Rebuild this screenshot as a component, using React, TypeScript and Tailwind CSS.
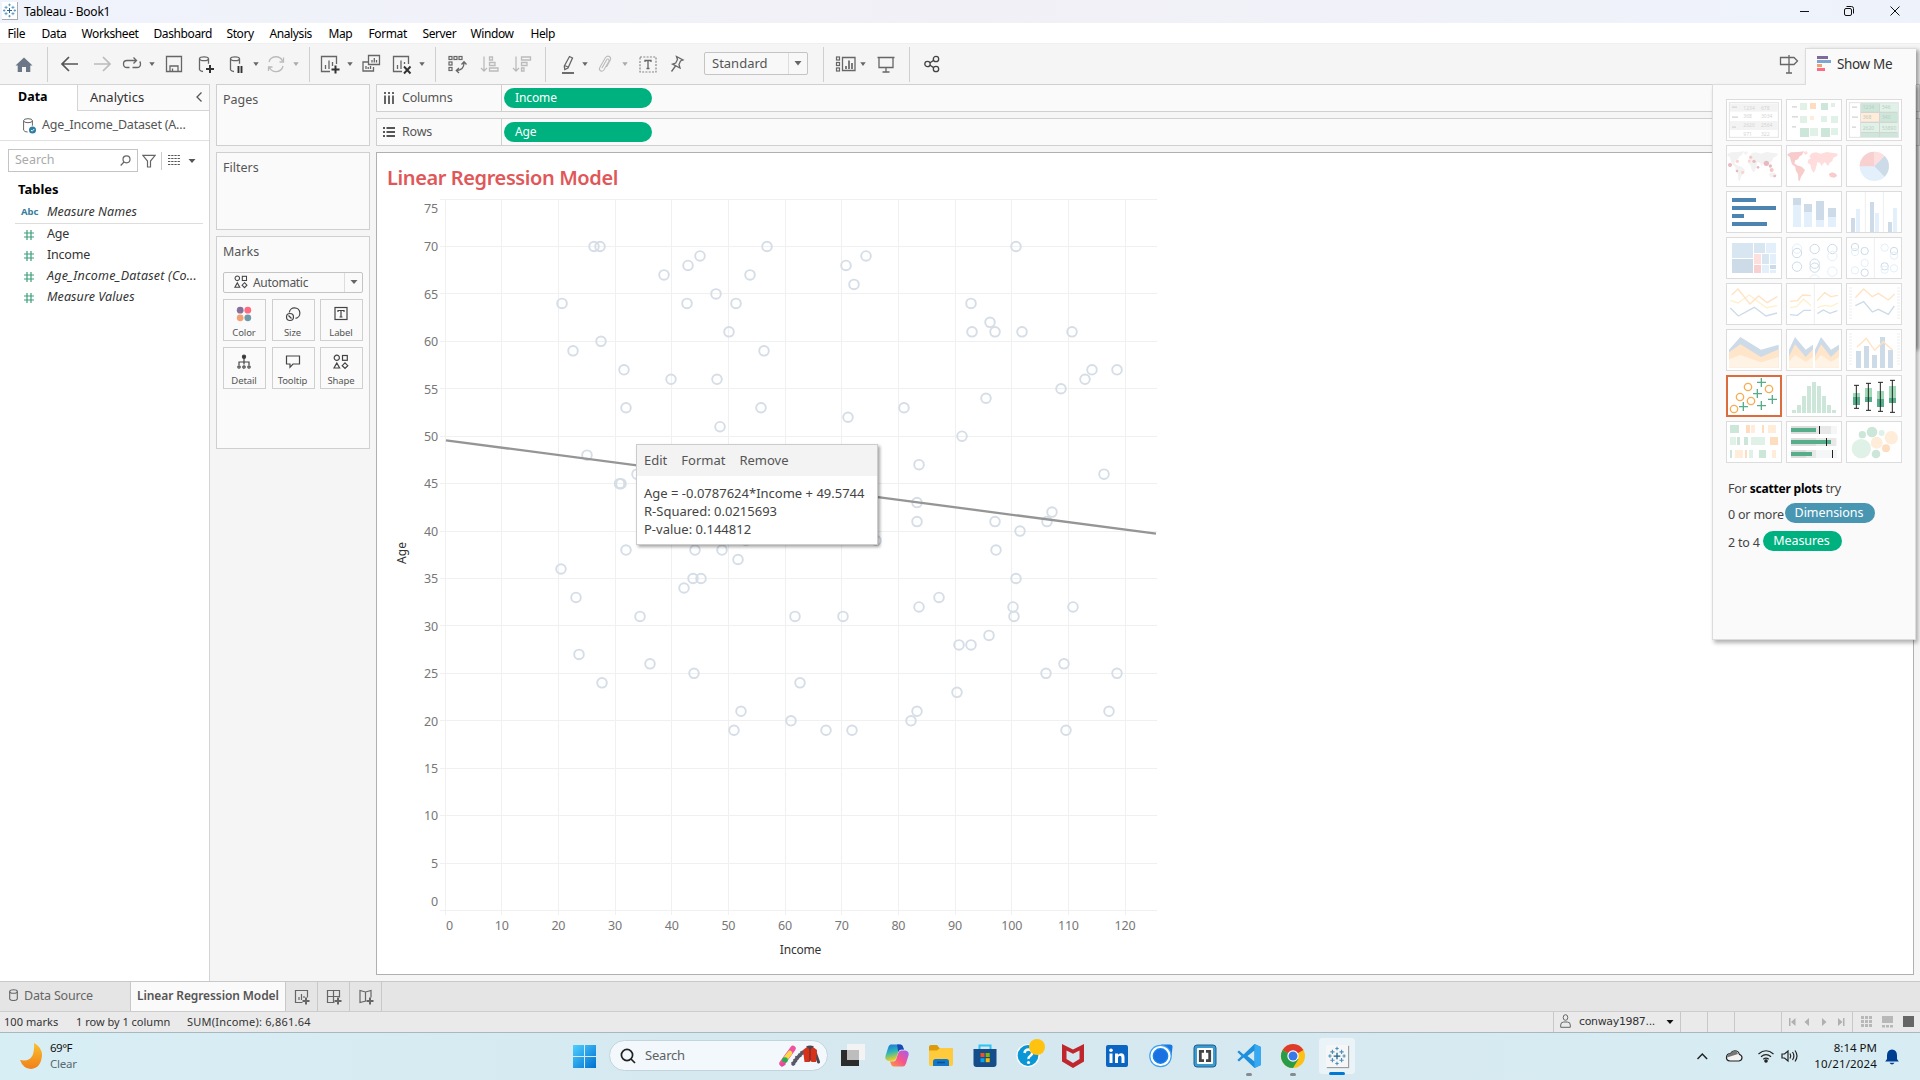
import React from "react";

type Kids = { children?: React.ReactNode };

const UI = "font-['Noto_Sans',sans-serif]";

function Ico({ m, c = "#666", children }: Kids & { m: string; c?: string }) {
  return (
    <svg className={`h-6 w-6 shrink-0 ${m}`} viewBox="0 0 24 24" fill="none" stroke={c} strokeWidth="1.3">
      {children}
    </svg>
  );
}

function Caret({ m, c = "#666" }: { m: string; c?: string }) {
  return (
    <svg className={`h-2 w-2 shrink-0 ${m}`} viewBox="0 0 8 8">
      <path d="M1.3 2.2h5.4L4 6z" fill={c} />
    </svg>
  );
}

function Sep({ m }: { m: string }) {
  return <div className={`h-[35px] w-px shrink-0 bg-[#cfcfcf] ${m}`} />;
}

const sq = (x: number, y: number, s = 3) => <rect key={`${x}-${y}`} x={x} y={y} width={s} height={s} />;

function TitleBar() {
  return (
    <div className="flex h-[23px] items-center bg-gradient-to-r from-[#eff3fb] via-[#f2f0f7] to-[#eef3fb] pl-[2px]">
      <div className="mt-[-2px] flex h-[18px] w-4 items-center justify-center border-r border-b border-[#aaa] bg-white">
        <TableauMark size={15} />
      </div>
      <span className="ml-[6px] w-[1772px] text-[12px] tracking-[-0.22px] text-black">Tableau - Book1</span>
      <svg className="mt-[-2px] h-5 w-[110px]" viewBox="0 0 110 20" fill="none" stroke="#111" strokeWidth="1">
        <path d="M4 10.500h9M94.500 5.500l9 9M103.500 5.500l-9 9" />
        <rect x="48.500" y="7.500" width="7" height="7" rx="1.500" />
        <path d="M50.500 5.500h5q2 0 2 2v5" />
      </svg>
    </div>
  );
}

function TableauMark({ size }: { size: number }) {
  return (
    <svg width={size} height={size} viewBox="0 0 24 24" stroke="#2f7ba7" strokeWidth="1.300" fill="none">
      <path d="M12 8v8M8 12h8" stroke="#1f5f86" strokeWidth="1.500" />
      <path d="M12 1v4M10 3h4M12 19v4M10 21h4M1.500 12h4M3.500 10v4M18.500 12h4M20.500 10v4M6.500 4.500v5M4 7h5M17.500 4.500v5M15 7h5M6.500 14.500v5M4 17h5M17.500 14.500v5M15 17h5" stroke="#4a8fbd" />
    </svg>
  );
}

function MenuBar() {
  return (
    <div className="flex h-5 items-center bg-white pt-[2px] pl-[7.500px] text-[12px] tracking-[-0.4px] text-black [&>span]:shrink-0">
      <span className="w-[34px]">File</span>
      <span className="w-[40px]">Data</span>
      <span className="w-[72px]">Worksheet</span>
      <span className="w-[73px]">Dashboard</span>
      <span className="w-[43px]">Story</span>
      <span className="w-[59px]">Analysis</span>
      <span className="w-[40px]">Map</span>
      <span className="w-[54px]">Format</span>
      <span className="w-[48px]">Server</span>
      <span className="w-[60px]">Window</span>
      <span>Help</span>
    </div>
  );
}

const Cyl = ({ x = 5 }: { x?: number }) => (
  <g transform={`translate(${x} 4.500)`}>
    <ellipse cx="5" cy="2.200" rx="4.500" ry="1.900" />
    <path d="M.5 2.200v11q1 1.800 3.500 1.800M9.500 2.200v5" />
  </g>
);

function Toolbar() {
  return (
    <div className="flex h-[41px] items-center border-t border-[#efefef] bg-[#f5f5f5]">
      <Ico m="ml-3" c="none">
        <path d="M12 5.500l8.500 8h-2.200v6.500h-4.300v-5h-4v5H5.700v-6.500H3.500z" fill="#6b7787" />
      </Ico>
      <Sep m="ml-[11px]" />
      <Ico m="ml-[10px]" c="#555"><path d="M20 12H4.500M11 5l-7 7 7 7" strokeWidth="1.700" /></Ico>
      <Ico m="ml-2" c="#bbb"><path d="M4 12h15.500M13 5l7 7-7 7" strokeWidth="1.700" /></Ico>
      <Ico m="ml-[6px]"><path d="M9.500 15.500H7q-3.500 0-3.500-3.500t3.500-3.500h9M12.500 15.500H17q3.500 0 3.500-3.500 0-1.500-.8-2.500M13.500 5.500l3 3-3 3" /></Ico>
      <Caret m="ml-1" />
      <Ico m="ml-[6px]"><path d="M4.500 4.500h15v15h-15zM8 19v-5h8v5M10.500 19v-2.500" /></Ico>
      <Ico m="ml-2"><Cyl x={5} /><path d="M16 13v8M12 17h8" stroke="#333" strokeWidth="2" /></Ico>
      <Ico m="ml-[6px]"><Cyl x={6} /><path d="M14.500 14v7M17.500 14v7" stroke="#333" strokeWidth="1.900" /></Ico>
      <Caret m="ml-1" />
      <Ico m="ml-1" c="#bbb"><path d="M5 10a7.200 7.200 0 0 1 13.500-1M19 14A7.200 7.200 0 0 1 5.500 15.500M19.500 5.500V10h-4M4.500 19v-4h4" /></Ico>
      <Caret m="ml-1" c="#aaa" />
      <Sep m="ml-[9px]" />
      <Ico m="ml-2"><path d="M12 19.500H3.500v-15h15V12M7.500 17v-4M11 17V8.500M14.500 14v-4" /><path d="M17.500 13.500v8M13.500 17.500h8" stroke="#333" strokeWidth="2" /></Ico>
      <Caret m="ml-1" />
      <Ico m="ml-[5px]"><path d="M9.500 3.500h11v9h-11zM13 10.500V8M15.300 10.500V6M17.500 10.500V8M9 10H4v9h10.500v-4M7 17v-3M9.200 17v-2M11.500 17v-3" /></Ico>
      <Ico m="ml-[7px]"><path d="M12 19.500H3.500v-15h15V12M7.500 17v-4M11 17V8.500M14.500 12v-2" /><path d="M14 14.500l6.500 7M20.500 14.500l-6.500 7" stroke="#333" strokeWidth="1.900" /></Ico>
      <Caret m="ml-1" />
      <Sep m="ml-[9px]" />
      <Ico m="ml-[9px]">
        <g strokeWidth="1.200">{[sq(4, 4.500), sq(9, 4.500), sq(14, 4.500), sq(4, 10), sq(4, 15.500)]}</g>
        <path d="M19 11q0 7-7.500 7.500M16.500 12.500L19 9.800l2.500 2.700M14 16l-2.700 2.500L14 21" />
      </Ico>
      <Ico m="ml-[9px]" c="#bbb"><path d="M6 4.500v14.500M3 16l3 3 3-3M11.500 5h3v3h-3zM11.500 10.500h5.500v3h-5.500zM11.500 16h8.500v3h-8.500z" /></Ico>
      <Ico m="ml-2" c="#bbb"><path d="M6 4.500v14.500M3 16l3 3 3-3M11.500 5h9v3h-9zM11.500 10.500h5.500v3h-5.500zM11.500 16h2.500v3h-2.500z" /></Ico>
      <Sep m="ml-[11px]" />
      <Ico m="ml-[10px]"><path d="M13.500 4.500l3 1.500-4.500 10-3.200 1.500-.5-3.500zM8.500 13.500l3.500 1.500" /><path d="M6 21h12" strokeWidth="1.900" /></Ico>
      <Caret m="ml-[1px]" />
      <Ico m="ml-1" c="#bbb"><path d="M9 16l4.500-8q1-1.500 2-.8t.3 2.300L10.800 18q-1.500 2-3.300.8t-.7-3.300L12.500 5.500q1.800-2.200 3.800-1t1 3.500L13.500 15" strokeWidth="1.100" /></Ico>
      <Caret m="ml-1" c="#aaa" />
      <Ico m="ml-[7px]"><rect x="4" y="5" width="16" height="15" strokeDasharray="2 1.300" strokeWidth="1.200" stroke="#888" /><path d="M9 10V8.500h6V10M12 8.500v8M10.500 16.500h3" /></Ico>
      <Ico m="ml-[5px]"><path d="M11.500 4.500l6.500 3.500-2.500 1-1.500 3.500 1 3.500-7.500-3.800 3.200-1.200 1.800-3.500zM10.500 14l-4 5.500" /></Ico>
      <div className="mt-[-2px] ml-[15px] flex h-[23px] w-[104px] shrink-0 items-center rounded-[2px] border border-[#c4c4c4] bg-[#f8f8f8] text-[13px] text-[#555]">
        <span className="w-[84px] border-r border-[#ddd] pl-[7px] leading-[21px]">Standard</span>
        <svg className="ml-[5px] h-2 w-2" viewBox="0 0 8 8"><path d="M.5 2h7L4 6.500z" fill="#666" /></svg>
      </div>
      <Sep m="ml-[15px]" />
      <Ico m="ml-[10px]">
        <g strokeWidth="1.200">{[sq(2.500, 5), sq(2.500, 10.500), sq(2.500, 16)]}</g>
        <path d="M8.500 5.500h12.500v13H8.500z" /><path d="M12 17v-3M15 17V8.500M18 17v-6" strokeWidth="1.700" />
      </Ico>
      <Caret m="ml-[1px]" />
      <Ico m="ml-[7px]"><path d="M3.500 5.500h17M5 5.500v10h14v-10M12 15.500v4.500M8.500 20h7" /></Ico>
      <Sep m="ml-[11px]" />
      <Ico m="ml-[10px]" c="#444"><circle cx="7.500" cy="12" r="2.700" /><circle cx="16" cy="7" r="2.700" /><circle cx="16" cy="17" r="2.700" /><path d="M10 10.700l3.700-2.300M10 13.300l3.700 2.300" /></Ico>
      <Ico m="ml-[833px]"><path d="M12 3v18M9 21h6M3.500 5.500H17l3.500 3.500-3.500 3.500H3.500z" fill="#f5f5f5" /></Ico>
    </div>
  );
}

function Hash() {
  return (
    <svg className="ml-6 h-3 w-[10px]" viewBox="0 0 10 12" stroke="#3d9f7a" strokeWidth="1.200">
      <path d="M3 1v10M7 1v10M0 4h10M0 8h10" />
    </svg>
  );
}

function DataPane() {
  return (
    <div className="flex w-[210px] shrink-0 flex-col border-t border-r border-[#d4d4d4] bg-white">
      <div className="flex h-[26px] shrink-0 text-[13px]">
        <div className="w-[77px] pl-[18px] text-[12.500px] leading-[24px] font-bold text-black">Data</div>
        <div className="flex grow items-center border-b border-l border-[#d4d4d4] bg-[#fafafa] pr-[6px] pl-3">
          <span className="mt-[-2px] grow leading-[24px] text-[#333]">Analytics</span>
          <svg className="mt-[-2px] h-3 w-2" viewBox="0 0 8 12" fill="none" stroke="#555" strokeWidth="1.300"><path d="M6.500 1.500L2 6l4.500 4.500" /></svg>
        </div>
      </div>
      <div className="flex h-[30px] shrink-0 items-center border-b border-[#e0e0e0] pl-[23px]">
        <svg className="h-4 w-[14px]" viewBox="0 0 14 16" fill="none" stroke="#666">
          <ellipse cx="5" cy="2.700" rx="4.400" ry="2" /><path d="M.6 2.700v9.500q1 1.800 4 1.800M9.400 2.700v5" />
          <circle cx="9.500" cy="12" r="3.500" fill="#2e7da3" stroke="none" /><path d="M8 12l1.200 1.200 2-2.200" stroke="#fff" strokeWidth=".9" />
        </svg>
        <span className="ml-[5px] text-[12.500px] tracking-[-0.2px] whitespace-nowrap text-[#555]">Age_Income_Dataset (A...</span>
      </div>
      <div className="mt-[8px] flex h-[23px] shrink-0 items-center pl-2">
        <div className="flex h-[23px] w-[130px] items-center border border-[#c4c4c4] pr-[6px] pl-[6px]">
          <span className="grow text-[12.500px] text-[#aaa]">Search</span>
          <svg className="h-[11px] w-[11px]" viewBox="0 0 11 11" fill="none" stroke="#666" strokeWidth="1.200"><circle cx="6.500" cy="4.300" r="3.500" /><path d="M4 7L.7 10.500" /></svg>
        </div>
        <svg className="ml-1 h-[14px] w-[14px]" viewBox="0 0 14 14" fill="none" stroke="#666" strokeWidth="1.200"><path d="M.8 1.300h12.400L8.500 7v6H5.500V7z" /></svg>
        <div className="ml-[5px] h-[18px] w-px bg-[#ccc]" />
        <svg className="mt-[-2px] ml-[6px] h-[10px] w-3" viewBox="0 0 12 10" stroke="#555"><path d="M0 .5h12M0 3.500h12M0 6.500h12M0 9.500h12" strokeDasharray="2.300 .9" /></svg>
        <svg className="ml-[8px] h-2 w-2" viewBox="0 0 8 8"><path d="M.5 2h7L4 6z" fill="#555" /></svg>
      </div>
      <div className="mt-[6px] h-[23px] shrink-0 pl-[18px] text-[13px] leading-[22px] font-bold text-black">Tables</div>
      <div className="mx-[15px] mr-[6px] flex h-[23px] shrink-0 items-center border-b border-[#ddd] text-[12.500px] italic">
        <span className="w-[32px] pl-[6px] text-[9.500px] font-bold not-italic text-[#3a7d9c]">Abc</span>
        <span className="tracking-[0.050px] text-[#333]">Measure Names</span>
      </div>
      <div className="flex flex-col text-[12.500px] tracking-[-0.2px] text-[#333]">
        {["Age", "Income", "Age_Income_Dataset (Co...", "Measure Values"].map((t, i) => (
          <div key={t} className="flex h-[21px] items-center whitespace-nowrap">
            <Hash />
            <span className={i === 2 ? "ml-[13px] tracking-[0.200px] italic" : i === 3 ? "ml-[13px] tracking-[0.080px] italic" : "ml-[13px]"}>{t}</span>
          </div>
        ))}
      </div>
    </div>
  );
}

const Shapes = () => (
  <>
    <circle cx="3.800" cy="3.800" r="2.600" /><rect x="9.500" y="1.500" width="4.800" height="4.800" />
    <path d="M3.800 9L1 14h5.600zM12 8.800L14.800 11.700 12 14.500 9.200 11.700z" />
  </>
);

function MarkButton({ label, children }: Kids & { label: string }) {
  return (
    <div className="flex h-[42px] w-[43px] flex-col items-center border border-[#cfcfcf] bg-[#fafafa] pt-[6px] pr-px">
      <svg className="h-4 w-4 shrink-0" viewBox="0 0 16 16" fill="none" stroke="#444" strokeWidth="1.200">{children}</svg>
      <span className="mt-[4px] text-[9.500px] leading-[14px] tracking-[-0.1px] text-[#555]">{label}</span>
    </div>
  );
}

function Cards() {
  return (
    <div className="ml-[6px] flex w-[154px] shrink-0 flex-col gap-[6px] text-[12.500px] text-[#555] [&>div]:border [&>div]:border-[#cfcfcf] [&>div]:bg-[#fafafa]">
      <div className="h-[62px] pt-[6px] pl-[6px]">Pages</div>
      <div className="h-[78px] pt-[6px] pl-[6px]">Filters</div>
      <div className="h-[213px] pt-[6px] pl-[6px]">
        <div>Marks</div>
        <div className="mt-[10px] flex h-[21px] w-[140px] items-center rounded-[2px] border border-[#c4c4c4]">
          <svg className="ml-[10px] h-[14px] w-[14px]" viewBox="0 0 16 16" fill="none" stroke="#444" strokeWidth="1.200"><Shapes /></svg>
          <span className="ml-[5px] w-[92px] border-r border-[#ddd] pt-px text-[12px] leading-[18px] tracking-[-0.3px]">Automatic</span>
          <svg className="ml-[5px] h-2 w-2" viewBox="0 0 8 8"><path d="M.5 2h7L4 6z" fill="#666" /></svg>
        </div>
        <div className="mt-[6px] grid w-[140px] grid-cols-[43px_43px_43px] justify-between gap-y-[6px]">
          <MarkButton label="Color">
            <g stroke="none"><circle cx="4.200" cy="4.200" r="3.400" fill="#86719b" /><circle cx="11.800" cy="4.200" r="3.400" fill="#ff6b80" /><circle cx="4.200" cy="11.800" r="3.400" fill="#f2a173" /><circle cx="11.800" cy="11.800" r="3.400" fill="#6e9aa8" /></g>
          </MarkButton>
          <MarkButton label="Size"><path d="M4.300 6.500a5.300 5.300 0 1 1 6.200 5.800" /><circle cx="5" cy="11" r="3.500" /><path d="M3.500 9.500l3 3" /></MarkButton>
          <MarkButton label="Label"><rect x="2" y="1.500" width="12" height="12" /><path d="M5 6V4.500h6V6M8 4.500v6.500M6.500 11h3" /></MarkButton>
          <MarkButton label="Detail"><circle cx="8" cy="2.800" r="1.600" fill="#333" /><path d="M8 4v6.500M3 11V8h10v3" /><circle cx="3" cy="13" r="1.200" /><circle cx="8" cy="13" r="1.200" /><circle cx="13" cy="13" r="1.200" /></MarkButton>
          <MarkButton label="Tooltip"><path d="M1.500 2h13v8H8l-3 3.300V10H1.500z" /></MarkButton>
          <MarkButton label="Shape"><Shapes /></MarkButton>
        </div>
      </div>
    </div>
  );
}

function Shelf({ name, pill, rows }: { name: string; pill: string; rows?: boolean }) {
  return (
    <div className="flex h-7 items-center border border-[#cfcfcf] bg-[#fafafa]">
      <div className="flex h-full w-[125px] items-center border-r border-[#cfcfcf] pl-[6px] text-[12.500px] tracking-[-0.2px] text-[#555]">
        <svg className="mr-[7px] h-3 w-3" viewBox="0 0 12 12" stroke="#555" strokeWidth="1.800">
          {rows ? <path d="M0 2h2M3.500 2h8.500M0 6h2M3.500 6h8.500M0 10h2M3.500 10h8.500" /> : <path d="M2 0v2M2 3.500v8.500M6 0v2M6 3.500v8.500M10 0v2M10 3.500v8.500" />}
        </svg>
        {name}
      </div>
      <div className="ml-[2px] h-5 w-[148px] rounded-full bg-[#00b180] pl-[11px] text-[12px] leading-5 tracking-[-0.1px] text-white">{pill}</div>
    </div>
  );
}

const points: [number, number][] = [
  [594, 70], [600, 70], [562, 64], [573, 59], [601, 60], [624, 57], [626, 53], [587, 48], [619.5, 45], [621, 45],
  [637, 46], [626, 38], [561, 36], [576, 33], [579, 27], [602, 24], [640, 31], [650, 26], [664, 67], [688, 68],
  [700, 69], [687, 64], [716, 65], [736, 64], [750, 67], [767, 70], [729, 61], [764, 59], [671, 56], [717, 56],
  [761, 53], [720, 51], [695, 38], [722, 38], [738, 37], [693, 35], [701, 35], [684, 34], [694, 25], [741, 21],
  [734, 19], [795, 31], [800, 24], [791, 20], [826, 19], [843, 31], [852, 19], [846, 68], [866, 69], [854, 66],
  [848, 52], [904, 53], [876, 39], [746, 39], [917, 43], [917, 41], [919, 47], [962, 50], [986, 54], [971, 64],
  [972, 61], [990, 62], [995, 61], [1022, 61], [1016, 70], [1072, 61], [1061, 55], [1085, 56], [1092, 57], [1117, 57],
  [1104, 46], [1052, 42], [1047, 41], [1020, 40], [995, 41], [996, 38], [1016, 35], [1013, 32], [1014, 31], [939, 33],
  [919, 32], [989, 29], [959, 28], [971, 28], [957, 23], [917, 21], [911, 20], [1073, 32], [1064, 26], [1046, 25],
  [1117, 25], [1109, 21], [1066, 19],
];

const ageY = (a: number) => 910.5 - a * 9.486;
const incomeX = (v: number) => 445.5 + v * 5.667;
const snap = (v: number) => Math.floor(v) + 0.5;

function Chart() {
  const ages = Array.from({ length: 16 }, (_, i) => i * 5);
  const incomes = Array.from({ length: 13 }, (_, i) => i * 10);
  return (
    <svg className="block h-[770px] w-[800px]" viewBox="377 199 800 770">
      <g stroke="#f0f0f0">
        {ages.map((a) => <path key={a} d={`M440 ${snap(ageY(a))}H1157`} />)}
        {incomes.map((v) => <path key={v} d={`M${snap(incomeX(v) - 0.4)} 199V915`} />)}
      </g>
      <g fill="#777" fontSize="12.500" letterSpacing="-0.2">
        {ages.map((a) => (
          <text key={a} x="438" y={a === 0 ? 906 : a === 75 ? 213 : ageY(a) + 4.800} textAnchor="end">{a}</text>
        ))}
        {incomes.map((v) => (
          <text key={v} x={v === 0 ? 449.500 : incomeX(v) - 0.5} y="930" textAnchor="middle">{v}</text>
        ))}
      </g>
      <g fill="#333" fontSize="12" textAnchor="middle">
        <text x="800.500" y="954" letterSpacing="-0.2">Income</text>
        <text transform="translate(406 553) rotate(-90)">Age</text>
      </g>
      <g fill="none" stroke="#d5dde6" strokeWidth="1.900">
        {points.map(([x, a], i) => <circle key={i} cx={x} cy={ageY(a)} r="4.800" />)}
      </g>
      <path d="M446 440.300L1156 533.700" stroke="#959595" strokeWidth="2.300" />
    </svg>
  );
}

function Worksheet() {
  return (
    <div className="relative mt-[6px] h-[823px] w-[1538px] border border-[#b0b0b0] bg-white">
      <div className="h-[46px] pt-[9px] pl-[10px] text-[20px] leading-[32px] font-semibold tracking-[-0.4px] text-[#e15759]">Linear Regression Model</div>
      <Chart />
      <div className="absolute top-[291px] left-[259px] h-[101px] w-[242px] border border-[#ccc] bg-white text-[13px] text-[#444] shadow-[2px_2px_3px_rgba(0,0,0,0.35)]">
        <div className="flex h-[31px] items-center gap-[14px] bg-[#f3f3f3] pl-[7px] pt-px text-[#555]">
          <span>Edit</span><span>Format</span><span>Remove</span>
        </div>
        <div className="pt-[8px] pl-[7px] leading-[18px] whitespace-nowrap">
          <div>Age = -0.0787624*Income + 49.5744</div>
          <div>R-Squared: 0.0215693</div>
          <div>P-value: 0.144812</div>
        </div>
      </div>
    </div>
  );
}

function Thumb({ on, children }: Kids & { on?: boolean }) {
  return (
    <div className={`h-[42px] w-14 bg-white ${on ? "border-2 border-[#dd6b3b]" : "border border-[#dcdcdc]"}`}>
      <svg className="block h-full w-full" viewBox={on ? "6 6 156 114" : "3 3 162 120"} fill="none">{children}</svg>
    </div>
  );
}

type R = [number, number, number, number, string];
const rects = (list: R[]) => list.map(([x, y, w, h, f], i) => <rect key={i} x={x} y={y} width={w} height={h} fill={f} />);
type C = [number, number, number, string];
const rings = (list: C[], w = 3) => list.map(([x, y, r, s], i) => <circle key={i} cx={x} cy={y} r={r} stroke={s} strokeWidth={w} />);
const dots = (list: C[]) => list.map(([x, y, r, f], i) => <circle key={i} cx={x} cy={y} r={r} fill={f} />);

const LB = "#e3f0fb", MB = "#cddbe8", LG = "#e0f2e8", MG = "#cce6da", DG = "#55ad89", LO = "#ffecd9", MO = "#fddcc0", LR = "#ffdede", MR = "#f7d0cf";

const americas = "M5 27l10-5 22-1 17-2-6 10-8 6-4 8-8 3-3 9 8 6 14 4 10 10-5 10-7 10-4 13-4-2-1-18-7-12-1-10-10-8-4-12-2-9-8-6z";
const oceania = "M128 87l10-5 12 4 3 7-8 5-12-2z";
const eurasia = "M70 33l8-9 12-2 14 4 18-5 20 3 14 2-4 8-10 4-3 10-8 5-4 9-5-3-5-8-6 5-4 8-5-10-8-3-2 10-4 14-5 8-6-8-4-16-8-6 1-8 8-5zM52 21l10-2 4 6-8 5z";

function Ticks({ x }: { x: number }) {
  return <path d={[15, 24, 33, 42, 51, 60, 69, 78, 87, 96, 105].map((y) => `M${x} ${y}h9`).join("")} stroke="#eee" strokeWidth="3" />;
}

function Thumbs() {
  return (
    <div className="grid grid-cols-[56px_56px_56px] gap-x-1 gap-y-1">
      <Thumb>
        <rect x="10" y="11" width="147" height="104" stroke="#e3e3e3" strokeWidth="3" />
        {rects([[12, 14, 143, 24, "#f3f3f3"], [12, 66, 143, 27, "#f3f3f3"], [18, 22, 15, 5, "#ddd"], [18, 52, 18, 5, "#ddd"], [18, 82, 12, 5, "#ddd"]])}
        <g fill="#d4d4d4" fontSize="15">{["1234", "368", "2620", "971"].map((t, i) => <text key={t} x="52" y={32 + i * 26}>{t}</text>)}{["678", "3034", "2564", "322"].map((t, i) => <text key={t} x="105" y={32 + i * 26}>{t}</text>)}</g>
      </Thumb>
      <Thumb>{rects([[18, 21, 15, 5, "#ddd"], [18, 51, 18, 5, "#ddd"], [18, 81, 12, 5, "#ddd"], [42, 12, 21, 21, LG], [72, 12, 18, 18, MO], [105, 12, 21, 21, MG], [135, 12, 12, 12, LG], [42, 51, 21, 21, LG], [72, 51, 12, 12, LO], [105, 51, 18, 18, LG], [135, 51, 21, 21, LG], [42, 87, 27, 27, MG], [72, 87, 24, 24, LG], [105, 87, 27, 27, MG], [135, 87, 21, 21, LG]])}</Thumb>
      <Thumb>
        <rect x="10" y="11" width="147" height="104" stroke="#e3e3e3" strokeWidth="3" />
        {rects([[18, 22, 15, 5, "#ddd"], [18, 52, 18, 5, "#ddd"], [18, 82, 12, 5, "#ddd"], [43, 13, 112, 101, "#d4d4d4"], [45, 13, 54, 25, MG], [102, 13, 54, 25, LG], [45, 42, 54, 26, LO], [102, 42, 54, 26, MG], [45, 72, 54, 27, LG], [102, 72, 54, 27, LG], [45, 102, 54, 12, MG], [102, 102, 54, 12, MG]])}
        <g fill="#bcccc3" fontSize="15">{["1234", "368", "2620"].map((t, i) => <text key={t} x="50" y={30 + i * 31}>{t}</text>)}{["546", "340", "53890"].map((t, i) => <text key={t} x="108" y={30 + i * 31}>{t}</text>)}</g>
      </Thumb>
      <Thumb><path d={americas + eurasia + oceania} fill="#f2f2f2" />{dots([[12, 60, 6, "#e8b9c0"], [34, 49, 5, "#fbd3cf"], [74, 37, 5, "#f7c8c0"], [84, 49, 5, "#e8b9c0"], [70, 48, 4, "#fbd3cf"], [96, 67, 4, "#e8b9c0"], [121, 55, 8, "#e8b9c0"], [133, 63, 5, "#e8b9c0"], [137, 75, 6, "#f7c8c0"], [33, 78, 4, "#e8b9c0"], [50, 82, 5, "#fbd3cf"], [146, 93, 4, "#e8b9c0"]])}</Thumb>
      <Thumb><path d={eurasia} fill="#ffdddd" /><path d={americas + oceania} fill="#f7cccb" /></Thumb>
      <Thumb><circle cx="85" cy="64" r="44" fill={LB} /><path d="M85 64V20A44 44 0 0 0 41 64z" fill={MR} /><path d="M85 64V20a44 44 0 0 1 31 13z" fill={LR} /><path d="M85 64l31-31a44 44 0 0 1 0 62z" fill={MB} /></Thumb>
      <Thumb>{rects([[18, 21, 72, 12, "#4e84b0"], [18, 45, 132, 12, "#4e84b0"], [18, 69, 36, 12, "#4e84b0"], [18, 93, 105, 12, "#4e84b0"]])}</Thumb>
      <Thumb>{rects([[21, 21, 24, 87, LB], [21, 21, 24, 21, MB], [54, 39, 24, 69, LB], [54, 39, 24, 24, MB], [90, 30, 24, 78, LB], [90, 30, 24, 57, MB], [126, 51, 24, 57, LB], [126, 51, 24, 27, MB]])}</Thumb>
      <Thumb><path d="M58 3v120M112 3v120" stroke="#eee" strokeWidth="3" />{rects([[15, 81, 12, 42, MB], [30, 54, 12, 69, LB], [72, 33, 12, 90, MB], [87, 66, 12, 57, LB], [126, 93, 12, 30, MB], [141, 51, 12, 72, LB]])}</Thumb>
      <Thumb>{rects([[18, 18, 63, 45, "#d8e6f2"], [18, 66, 63, 42, MB], [84, 18, 33, 30, "#d8e6f2"], [120, 18, 30, 30, LB], [84, 51, 21, 30, LR], [108, 51, 21, 30, "#d8e6f2"], [132, 51, 18, 30, LB], [84, 84, 21, 24, MR], [108, 84, 21, 24, LB], [132, 84, 18, 12, MB], [132, 99, 18, 9, LB]])}</Thumb>
      <Thumb>{rings([[33, 35, 14, LB], [33, 48, 14, MB], [33, 89, 14, MB], [86, 36, 14, MB], [86, 80, 14, MB], [86, 92, 14, MB], [86, 127, 14, LB], [139, 36, 14, MB], [139, 57, 14, LB], [139, 104, 14, LB]])}</Thumb>
      <Thumb><path d="M85 3v120" stroke="#eee" strokeWidth="3" />{rings([[27, 30, 11, MB], [27, 45, 11, LB], [56, 42, 11, MB], [56, 78, 11, LB], [27, 100, 11, LB], [56, 107, 11, MB], [116, 32, 11, LB], [144, 42, 11, MB], [144, 56, 11, LB], [116, 88, 11, MB], [116, 98, 11, LB], [144, 94, 11, LB]])}</Thumb>
      <Thumb><g strokeWidth="4"><path d="M13 52l23 8 34-24 51 38 32-6" stroke="#fff0cc" /><path d="M17 36l19-18 36 45 26-24 25 20 31-18" stroke="#ffe3c4" /><path d="M13 75l24 24 48-26 35 26 33-9" stroke={MB} /></g></Thumb>
      <Thumb><path d="M85 3v120" stroke="#eee" strokeWidth="3" /><g strokeWidth="4"><path d="M12 74l20-3 21-23 22 20M94 74l21-7 20 3 21-10" stroke="#fff0cc" /><path d="M12 55l22-2 16-17 25 2M94 53l22-24 18 12 22-4" stroke="#ffe3c4" /><path d="M12 95l22 2 20-15h21M94 92l18-11 20 10 22-8" stroke={MB} /></g></Thumb>
      <Thumb><Ticks x={9} /><Ticks x={153} /><g strokeWidth="4"><path d="M28 44l25-26 26 23 18-10 30 20 19-18" stroke="#ffe3c4" /><path d="M28 68l25-12 26 31 18-8 30 15 18-25" stroke={MB} /></g></Thumb>
      <Thumb><path d="M9 62l34-38 62 38 53-15v69H9z" fill={MB} /><path d="M9 70l34-24 62 38 53-23v55H9z" fill="#ffe5c9" /><path d="M9 91l34-13 62 22 53-16v32H9z" fill="#fff3e5" /></Thumb>
      <Thumb><path d="M9 62l18-38 32 38 22-15v69H9zM87 62l18-38 30 38 24-15v69H87z" fill={MB} /><path d="M9 82l18-36 32 38 22-23v55H9zM87 82l18-36 30 38 24-23v55H87z" fill="#ffe5c9" /><path d="M9 97l18-19 32 20 22-14v32H9zM87 97l18-19 30 20 24-14v32H87z" fill="#fff3e5" /></Thumb>
      <Thumb><Ticks x={9} /><Ticks x={153} />{rects([[30, 66, 15, 51, MB], [54, 51, 15, 66, MB], [78, 78, 15, 39, MB], [102, 24, 15, 93, MB], [126, 63, 15, 54, MB]])}<path d="M33 54l28-26 25 36 26-26 28 26" stroke="#ffe3c4" strokeWidth="4" /></Thumb>
      <Thumb on>
        {rings([[24, 102, 11, "#f5ad52"], [42, 66, 11, "#f5ad52"], [66, 36, 11, "#f5ad52"], [75, 78, 11, "#f5ad52"], [129, 42, 11, "#f5ad52"]], 4)}
        <path d="M106 9v27M93 22h27M94 42v27M81 56h27M139 60v27M126 73h27M52 81v27M39 95h27M106 78v27M93 92h27" stroke={DG} strokeWidth="4" />
      </Thumb>
      <Thumb>{rects([[18, 105, 12, 9, MG], [33, 90, 12, 24, MG], [48, 63, 12, 51, MG], [63, 33, 12, 81, MG], [78, 21, 12, 93, MG], [93, 33, 12, 81, MG], [108, 63, 12, 51, MG], [123, 90, 12, 24, MG], [138, 105, 12, 9, MG]])}</Thumb>
      <Thumb>
        {rects([[21, 54, 21, 12, "#9ddab5"], [21, 66, 21, 24, DG], [57, 39, 21, 27, "#9ddab5"], [57, 66, 21, 15, DG], [93, 48, 21, 24, "#9ddab5"], [93, 72, 21, 24, DG], [129, 33, 21, 36, "#9ddab5"], [129, 69, 21, 15, DG]])}
        <path d="M31 31v69M24 31h15M24 100h15M67 25v81M60 25h15M60 106h15M103 22v87M96 22h15M96 109h15M139 16v96M132 16h15M132 112h15" stroke="#222" strokeWidth="3" />
      </Thumb>
      <Thumb>{rects([[12, 12, 27, 24, MG], [60, 12, 12, 24, MO], [75, 12, 12, 24, LO], [108, 12, 6, 24, MO], [126, 12, 24, 24, LO], [12, 48, 18, 24, LG], [33, 48, 9, 24, MG], [54, 48, 12, 24, MG], [75, 48, 42, 24, LG], [132, 48, 24, 24, MO], [12, 87, 6, 24, MG], [27, 87, 24, 24, LO], [57, 87, 6, 24, MO], [69, 87, 12, 24, LG], [99, 87, 21, 24, MG], [138, 87, 12, 24, LO]])}</Thumb>
      <Thumb>
        {[15, 51, 87].map((y) => <g key={y}>{rects([[15, y, 138, 24, "#f5f6f8"], [15, y, y === 15 ? 120 : y === 51 ? 135 : 75, 24, "#e8e8e8"], [15, y, y === 87 ? 45 : 75, 24, "#dcdcdc"]])}</g>)}
        {rects([[15, 21, 75, 12, DG], [15, 57, 120, 12, DG], [15, 93, 63, 12, DG], [99, 15, 3, 24, "#222"], [120, 51, 3, 24, "#222"], [138, 87, 3, 24, "#222"]])}
      </Thumb>
      <Thumb>{dots([[46, 83, 29, LG], [49, 41, 11, MG], [78, 33, 16, MG], [107, 36, 9, LG], [136, 50, 20, LO], [92, 65, 18, LO], [120, 82, 12, MO], [90, 99, 13, MG]])}</Thumb>
    </div>
  );
}

function ShowMe() {
  return (
    <div className="absolute top-[48px] left-[1712px] w-[204px]">
      <div className="absolute top-0 right-0 h-[300px] w-[111px] shadow-[3px_2px_4px_rgba(0,0,0,0.35)]" />
      <div className="relative z-10 ml-[93px] flex h-[37px] w-[111px] items-center border-t border-l border-[#dcdcdc] bg-[#fafafa] pl-[11px]">
        <svg className="mt-[-6px] h-4 w-[14px]" viewBox="0 0 14 16"><path d="M0 0h11v3H0z" fill="#7f6a99" /><path d="M0 4h14v3H0z" fill="#7ca6cf" /><path d="M0 8h5v3H0z" fill="#f2a173" /><path d="M0 12h8v3H0z" fill="#ff6b80" /></svg>
        <span className="mt-[-6px] ml-[6px] text-[13.500px] tracking-[-0.350px] text-[#333]">Show Me</span>
      </div>
      <div className="relative mt-[-1px] h-[556px] border border-[#dcdcdc] bg-[#fafafa] pt-[14px] pl-[13px] text-[12.500px] text-[#444] shadow-[2px_3px_4px_rgba(0,0,0,0.3)]">
        <Thumbs />
        <div className="mt-[16px] leading-5 tracking-[-0.2px]">
          <div className="pl-[2px]">For <b className="text-[12px] text-black">scatter plots</b> try</div>
          <div className="mt-[4px] flex items-start pl-[2px]">
            <span className="mt-[2px] w-[57px]">0 or more</span>
            <span className="h-5 w-[90px] rounded-full bg-[#4996b2] pr-[2px] text-center leading-[19px] tracking-[-0.050px] text-white">Dimensions</span>
          </div>
          <div className="mt-[6px] flex items-start pl-[2px]">
            <span className="mt-[2px] w-[35px]">2 to 4</span>
            <span className="h-5 w-[79px] rounded-full bg-[#00b180] pr-[2px] text-center leading-[19px] tracking-[-0.1px] text-white">Measures</span>
          </div>
        </div>
      </div>
    </div>
  );
}

function SheetTabs() {
  return (
    <div className="flex h-[30px] border-t border-[#c8c8c8] bg-[#e5e5e5] text-[12.500px] tracking-[-0.2px] text-[#666]">
      <div className="flex w-[130px] items-center pl-[9px]">
        <svg className="mt-[-3px] mr-[6px] h-3 w-[9px]" viewBox="0 0 9 12" fill="none" stroke="#666" strokeWidth="1.100"><ellipse cx="4.500" cy="2.500" rx="3.800" ry="1.800" /><path d="M.7 2.500v7.500q.8 1.500 3.800 1.500t3.800-1.500V2.500" /></svg>
        Data Source
      </div>
      <div className="w-[156px] border-x border-[#c8c8c8] bg-[#fafafa] pl-[6px] text-[12px] leading-[27px] font-semibold tracking-[-0.1px] whitespace-nowrap text-[#555]">Linear Regression Model</div>
      {["M8.500 13.500h-7v-12h12v7M5 11V8M7.500 11V5M10 9V7", "M8.500 13.500h-7v-12h12v7M1.500 7.500h12M7.500 1.500v12", "M8 12L2 13.500v-12L7.500 3 13 1.500v7M7.500 3v9"].map((d) => (
        <div key={d} className="flex w-8 items-center justify-center border-r border-[#c8c8c8]">
          <svg className="h-4 w-4" viewBox="0 0 16 16" fill="none" stroke="#666" strokeWidth="1.200"><path d={d} /><path d="M12 8.500v7M8.500 12h7" strokeWidth="2" /></svg>
        </div>
      ))}
    </div>
  );
}

function StatusBar() {
  return (
    <div className="flex h-[21px] items-center border-t border-[#ccc] bg-[#eaeaea] text-[11px] text-[#333]">
      <span className="w-[72px] pl-1 tracking-[0.050px] whitespace-nowrap">100 marks</span>
      <span className="ml-1 w-[111px] whitespace-nowrap">1 row by 1 column</span>
      <span className="w-[1366px] tracking-[0.220px]">SUM(Income): 6,861.64</span>
      <div className="flex h-full w-[128px] items-center border-x border-[#c8c8c8] pl-[6px]">
        <svg className="mt-[-2px] h-[14px] w-[11px]" viewBox="0 0 11 14" fill="none" stroke="#666"><ellipse cx="5.500" cy="3.500" rx="2.300" ry="2.800" /><path d="M.7 13.300V11q0-3 3-3h3.600q3 0 3 3v2.300z" /></svg>
        <span className="ml-2 w-[87px] font-['DejaVu_Sans',sans-serif] text-[11px] tracking-[-0.350px]">conway1987...</span>
        <svg className="h-2 w-2" viewBox="0 0 8 8"><path d="M.5 2h7L4 6z" fill="#111" /></svg>
      </div>
      <div className="h-full w-[27px] border-r border-[#c8c8c8]" />
      <div className="h-full w-[27px] border-r border-[#c8c8c8]" />
      <div className="h-full w-[47px] border-r border-[#c8c8c8]" />
      <div className="flex h-full w-[71px] items-center border-r border-[#c8c8c8]">
        <svg className="mt-[-1px] ml-[7px] h-2 w-[56px]" viewBox="0 0 56 8" fill="#b0b0b0"><path d="M0 0h1.500v8H0zM6.500 0v8L2 4zM20 0v8l-4.500-4zM33 0v8l4.500-4zM49 0v8l4.500-4zM54 0h1.500v8H54z" /></svg>
      </div>
      <svg className="mt-[-1px] ml-2 h-3 w-[55px]" viewBox="0 0 55 12" fill="#b8b8b8">
        {[0, 4, 8].map((y) => [0, 4, 8].map((x) => <rect key={`${x}${y}`} x={x} y={y} width="3" height="3" />))}
        <path d="M21 0h11v7H21zM21 9h3v2.500h-3zM25 9h3v2.500h-3zM29 9h3v2.500h-3z" /><path d="M42 0h11v11H42z" fill="#666" />
      </svg>
    </div>
  );
}

function AppIcon({ children, mark }: Kids & { mark?: boolean }) {
  return (
    <div className="relative flex h-12 w-11 shrink-0 items-center justify-center pb-px">
      <svg className="h-6 w-6 overflow-visible" viewBox="0 0 24 24">{children}</svg>
      {mark && <div className="absolute bottom-[5px] h-[3px] w-[6px] rounded-full bg-[#858c91]" />}
    </div>
  );
}

function Taskbar() {
  return (
    <div className="flex h-[48px] items-center border-t border-[#a9b8bf] bg-gradient-to-r from-[#d8eef5] via-[#d5e7ef] to-[#d8edf3] text-[11.500px]">
      <svg className="mt-[-2px] ml-[19px] h-7 w-6" viewBox="0 0 24 28">
        <defs><linearGradient id="moon" x2="0" y2="1"><stop stopColor="#fbc02d" /><stop offset="1" stopColor="#f0801a" /></linearGradient></defs>
        <path d="M15 1q8 4 8 12.500Q22 26 12 27 4 26.500 1 18q9 2 12.500-4.500 2-5 1.500-12.500z" fill="url(#moon)" />
      </svg>
      <div className="mt-[-2px] ml-[7px] w-[523px] text-[11.500px] leading-[16px] tracking-[-0.2px] text-[#111]"><div className="tracking-[-0.5px]">69°F</div><div className="text-[#5a6a70]">Clear</div></div>
      <svg className="mt-[-1px] h-[23px] w-[23px]" viewBox="0 0 23 23">
        <defs><linearGradient id="win" x2="1" y2="1"><stop stopColor="#4fd0ff" /><stop offset="1" stopColor="#006fd0" /></linearGradient></defs>
        <path d="M0 0h11v11H0zM12 0h11v11H12zM0 12h11v11H0zM12 12h11v11H12z" fill="url(#win)" />
      </svg>
      <div className="mt-[-2px] ml-[13px] flex h-[31px] w-[219px] shrink-0 items-center rounded-full border border-[#c3d5dc] bg-[#f2f8fb] pl-[10px]">
        <svg className="h-4 w-4" viewBox="0 0 16 16" fill="none" stroke="#222" strokeWidth="1.700"><circle cx="7" cy="7" r="5.600" /><path d="M11 11l4 4" /></svg>
        <span className="ml-[9px] w-[134px] text-[13px] tracking-[-0.2px] text-[#5c6265]">Search</span>
        <svg className="h-[22px] w-[42px]" viewBox="0 0 42 22" fill="none" strokeLinecap="round">
          <path d="M3 18.500L14 3.500" stroke="#f2529d" strokeWidth="5.500" /><path d="M7 13l4-5" stroke="#ffd84a" strokeWidth="4.500" /><circle cx="6" cy="15" r="2.800" fill="#21b04b" /><path d="M3 20l2-1" stroke="#e64a9c" strokeWidth="3" />
          <path d="M14 19l4-6 6-6" stroke="#4a4854" strokeWidth="4.500" strokeDasharray="1 2.500" strokeLinecap="butt" /><path d="M14 19l4-6 6-6" stroke="#5a5866" strokeWidth="3.500" /><path d="M36 7l3.500 10" stroke="#4a4854" strokeWidth="3" /><path d="M24 5l4-3h6l4 3-1 12h-4.500l-1-2-1 2h-5z" fill="#d5321c" /><path d="M27 1.500q4-2 8 0l-4 3z" fill="#4a4854" /><path d="M31 4v12" stroke="#5a2a26" />
        </svg>
      </div>
      <div className="ml-[3px] flex">
        <AppIcon><path d="M0 6h18v16H0z" fill="#2c2c2c" /><path d="M6 0h18v16H6z" fill="#f3f3f3" /><path d="M6 6h12v10H6z" fill="#bdbdbd" /></AppIcon>
        <AppIcon>
          <defs>
            <linearGradient id="cpA" x2=".3" y2="1"><stop stopColor="#1d6fe0" /><stop offset=".5" stopColor="#2bb6b8" /><stop offset="1" stopColor="#f5d21c" /></linearGradient>
            <linearGradient id="cpB" x1="1" x2="0" y2="1"><stop stopColor="#a25ef5" /><stop offset=".5" stopColor="#f5548e" /><stop offset="1" stopColor="#ff9a3c" /></linearGradient>
          </defs>
          <path d="M6 .5h9q2.500 0 3.200 3L19 5.500h-3q-2 0-2.800 2.500l-2 6.500Q10 17 7.500 17H3.500Q-.5 16 .5 12L3 4Q4 .5 6 .5z" fill="url(#cpA)" />
          <path d="M12 .5h3q2.500 0 3.200 3L19 5.500h-3q-2 0-2.800 2.500z" fill="#1b48b8" />
          <path d="M18 22.500H9q-2.500 0-3.200-3L5 17.500h3.500q2 0 2.800-2.500l2-6Q14 6.500 16.500 6.500h4q4 1 3 5L21 19.500q-1 3-3 3z" fill="url(#cpB)" />
        </AppIcon>
        <AppIcon><path d="M0 3q0-2 2-2h6l2.500 3H22q2 0 2 2v4H0z" fill="#dd9b0a" /><path d="M0 6.500h8l3-2.500h11q2 0 2 2V20q0 2-2 2H2q-2 0-2-2z" fill="#ffcb3d" /><path d="M4 22v-4.500q0-2.500 2.500-2.500h11q2.500 0 2.500 2.500V22z" fill="#1277c9" /><path d="M8 18.500h8" stroke="#0a4e8f" strokeWidth="1.500" /></AppIcon>
        <AppIcon><path d="M6.500 6V1.500h11V6" fill="none" stroke="#2cc3f5" strokeWidth="2" /><path d="M.5 5h23v15q0 3-3 3h-17q-3 0-3-3z" fill="#144d8a" /><path d="M7.500 9h4v4h-4z" fill="#f25022" /><path d="M12.700 9h4v4h-4z" fill="#7fba00" /><path d="M7.500 14.200h4v4h-4z" fill="#00a4ef" /><path d="M12.700 14.200h4v4h-4z" fill="#ffb900" /></AppIcon>
        <AppIcon><circle cx="11" cy="11.500" r="11" fill="#0b97d6" stroke="#fff" strokeWidth="1.200" /><path d="M7.500 9q.5-3.500 4-3.500t3.700 3.200q0 2-2 3.300T11.500 15" fill="none" stroke="#fff" strokeWidth="2.500" /><circle cx="11.500" cy="18.500" r="1.600" fill="#fff" /><circle cx="20" cy="3" r="8" fill="#ffc20e" /></AppIcon>
        <AppIcon><path d="M1 0l11 5.500L23 0v17.500L12 24 1 17.500zM5.500 6.500v8.500l6.500 4 6.500-4V6.500L12 9.800z" fill="#c0272d" fillRule="evenodd" /></AppIcon>
        <AppIcon><rect x="1" y="1" width="22" height="22" rx="2" fill="#0a66c2" /><path d="M4.500 9.500h3v9.500h-3zM10 9.500h3v1.300q1-1.600 3-1.600 3.500 0 3.500 4V19h-3v-5.200q0-2-1.600-2T13 14v5h-3z" fill="#fff" /><circle cx="6" cy="6.300" r="1.800" fill="#fff" /></AppIcon>
        <AppIcon><path d="M12 .5h9q2.800 0 2.500 2.500L22.500 12z" fill="#1877e0" /><circle cx="11.500" cy="12" r="11.300" fill="#3f9ff0" /><circle cx="11.500" cy="12" r="9" fill="#1784ea" stroke="#fff" strokeWidth="2.200" /><circle cx="11.500" cy="12" r="6.500" fill="#1a70e0" /></AppIcon>
        <AppIcon><rect x="1" y="1" width="22" height="22" rx="3" fill="#3a9bd0" stroke="#1f5f8a" /><rect x="4" y="4" width="16" height="16" rx="1" fill="#fff" /><path d="M11 7.300H7.300v9.400H11M13 7.300h3.700v9.400H13" fill="none" stroke="#444" strokeWidth="2.800" /></AppIcon>
        <AppIcon mark><path d="M17.500 0L24 3v18l-6.500 3L6.500 13.500 2 17.500.3 16V8L2 6.500l4.500 4zM17.500 6.500L10.500 12l7 5.500zM.3 8L4.500 12l-4.200 4z" fill="#1e8fdc" fillRule="evenodd" /><path d="M17.500 0L24 3v18l-6.500 3z" fill="#36a9f0" /></AppIcon>
        <AppIcon mark>
          <circle cx="12" cy="12" r="12" fill="#fbc116" />
          <path d="M12 12L1.600 6A12 12 0 0 1 22.400 6z" fill="#de3b2e" /><path d="M12 12L1.600 6A12 12 0 0 0 12 24l5.500-9z" fill="#2a9b47" />
          <circle cx="12" cy="12" r="5.700" fill="#fff" /><circle cx="12" cy="12" r="4.500" fill="#3b78e7" />
        </AppIcon>
        <div className="relative mt-[-1px] ml-[3px] flex h-[38px] w-[38px] items-center justify-center self-center rounded-[4px] border border-[#dbe8ed] bg-[#eaf3f7]">
          <div className="flex h-[22px] w-[22px] items-center justify-center bg-[#f6f6f6] shadow-[1px_1px_1px_rgba(0,0,0,0.35)]"><TableauMark size={20} /></div>
          <div className="absolute -bottom-px h-[3px] w-4 rounded-full bg-[#0078d4]" />
        </div>
      </div>
      <svg className="mt-[-2px] ml-[340px] h-5 w-[110px] shrink-0" viewBox="0 0 110 20" fill="none" stroke="#222" strokeWidth="1.200">
        <path d="M1.500 13l4.800-5 4.800 5" strokeWidth="1.500" />
        <path d="M34 15q-4-.5-3.500-4t4-3.500q2-3.500 6-2.500 2.500.8 3 3.500 2.500.8 2.500 3.300T43 15z" fill="#f4f4f4" /><path d="M31 11.500q0-3 3.500-4 2-3.500 6-2.500L42 8z" fill="#777" stroke="none" />
        <g transform="translate(70 0)"><path d="M-7.500 8q7.500-6.500 15 0M-5 10.800q5-4.500 10 0M-2.700 13.300q2.700-2.400 5.400 0" /><circle cy="15" r="1.200" fill="#222" /></g>
        <path d="M86 8h2.500l3.500-3v10l-3.500-3H86zM94 7.500q1.500 2.500 0 5M96.500 6q2.800 4 0 8M99 4.500q4 5.500 0 11" />
      </svg>
      <div className="mt-[-2px] w-[71px] text-right text-[11.500px] leading-[16px] whitespace-nowrap text-[#111]"><div>8:14 PM</div><div className="tracking-[0.150px]">10/21/2024</div></div>
      <svg className="ml-2 h-4 w-[14px]" viewBox="0 0 14 16" fill="#003e92"><path d="M7 .5q5 .3 5 6v3.500l1.800 2.500H.2L2 10V6.500q0-5.700 5-6zM4.500 13.700h5Q8.500 15.500 7 15.500t-2.500-1.800z" /></svg>
    </div>
  );
}

export default function App() {
  return (
    <div className={`relative flex h-[1080px] w-[1920px] flex-col overflow-hidden bg-[#f5f5f5] ${UI}`}>
      <TitleBar />
      <MenuBar />
      <Toolbar />
      <div className="flex h-[897px] shrink-0">
        <DataPane />
        <Cards />
        <div className="ml-[6px] flex grow flex-col">
          <Shelf name="Columns" pill="Income" />
          <div className="h-[6px]" />
          <Shelf name="Rows" pill="Age" rows />
          <Worksheet />
        </div>
      </div>
      <SheetTabs />
      <StatusBar />
      <Taskbar />
      <ShowMe />
    </div>
  );
}
